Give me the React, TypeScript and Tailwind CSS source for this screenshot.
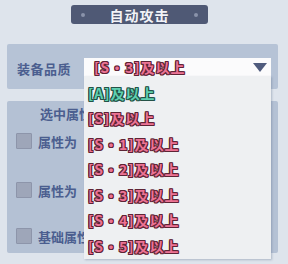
import React from 'react';

const pinkText =
  'text-[#ec7394] [text-shadow:1px_0_0_#5e2435,-1px_0_0_#5e2435,0_1px_0_#5e2435,0_-1px_0_#5e2435,1px_1px_0_#5e2435,-1px_-1px_0_#5e2435,1px_-1px_0_#5e2435,-1px_1px_0_#5e2435]';
const greenText =
  'text-[#5fd0b0] [text-shadow:1px_0_0_#245247,-1px_0_0_#245247,0_1px_0_#245247,0_-1px_0_#245247,1px_1px_0_#245247,-1px_-1px_0_#245247,1px_-1px_0_#245247,-1px_1px_0_#245247]';

const options = [
  { label: '[A]', green: true },
  { label: '[S]', green: false },
  { label: '[S·1]', green: false },
  { label: '[S·2]', green: false },
  { label: '[S·3]', green: false },
  { label: '[S·4]', green: false },
  { label: '[S·5]', green: false },
];

function CheckRow({ label }: { label: string }) {
  return (
    <div className="flex items-center h-[16px]">
      <div className="w-[16px] h-[16px] bg-[#9ea6b9] border border-[#8d95aa] rounded-[1px]" />
      <span className="ml-[6px] text-[13px] font-bold text-[#4b5e8f] leading-none">{label}</span>
    </div>
  );
}

export default function App() {
  return (
    <div className="w-[288px] h-[264px] bg-[#dee4ec] overflow-hidden font-['Noto_Sans_CJK_SC','Noto_Sans',sans-serif]">
      <div className="pt-[5px]">
        <div className="ml-[71px] w-[137px] h-[19px] bg-[#4f5975] rounded-[3px] flex items-center justify-between px-[10px]">
          <span className="w-[4px] h-[4px] rounded-full bg-[#8a93aa]" />
          <span className="text-[14px] font-bold text-[#f2f3f7] leading-none tracking-[1px]">自动攻击</span>
          <span className="w-[4px] h-[4px] rounded-full bg-[#8a93aa]" />
        </div>
      </div>

      <div className="mt-[20px] ml-[7px] w-[271px] h-[45px] bg-[#b6c3d6] rounded-[2px] flex items-start">
        <span className="ml-[10px] mt-[18px] text-[13px] font-bold text-[#4b5e8f] leading-none tracking-[0.5px]">装备品质</span>
        <div className="relative ml-[13px] mt-[14px] w-[187px] z-10">
          <div className="h-[18px] bg-[#fbfbfc] flex items-center justify-between pl-[10px] pr-[4px]">
            <span className={`text-[14px] font-bold leading-none tracking-[1px] ${pinkText}`}>[S·3]及以上</span>
            <svg width="14" height="9" viewBox="0 0 14 9">
              <path d="M0 0 H14 L7 9 Z" fill="#4f5b7d" />
            </svg>
          </div>
          <div className="absolute left-0 top-[18px] w-[187px] h-[183px] bg-[#eef0f2] pt-[4px] shadow-[1px_1px_2px_rgba(80,100,130,0.35)]">
            {options.map((o) => (
              <div key={o.label} className="h-[25.5px] flex items-center pl-[4px]">
                <span
                  className={`text-[14px] font-bold leading-none tracking-[1px] ${o.green ? greenText : pinkText}`}
                >
                  {o.label}及以上
                </span>
              </div>
            ))}
          </div>
        </div>
      </div>

      <div className="mt-[12px] ml-[7px] w-[271px] h-[152px] bg-[#b4c1d4] rounded-[2px] pt-[6px]">
        <div className="ml-[33px] text-[13px] font-bold text-[#4b5e8f] leading-none h-[14px]">选中属性</div>
        <div className="ml-[9px] mt-[12px]">
          <CheckRow label="属性为" />
        </div>
        <div className="ml-[9px] mt-[33px]">
          <CheckRow label="属性为" />
        </div>
        <div className="ml-[9px] mt-[30px]">
          <CheckRow label="基础属性" />
        </div>
      </div>
    </div>
  );
}
